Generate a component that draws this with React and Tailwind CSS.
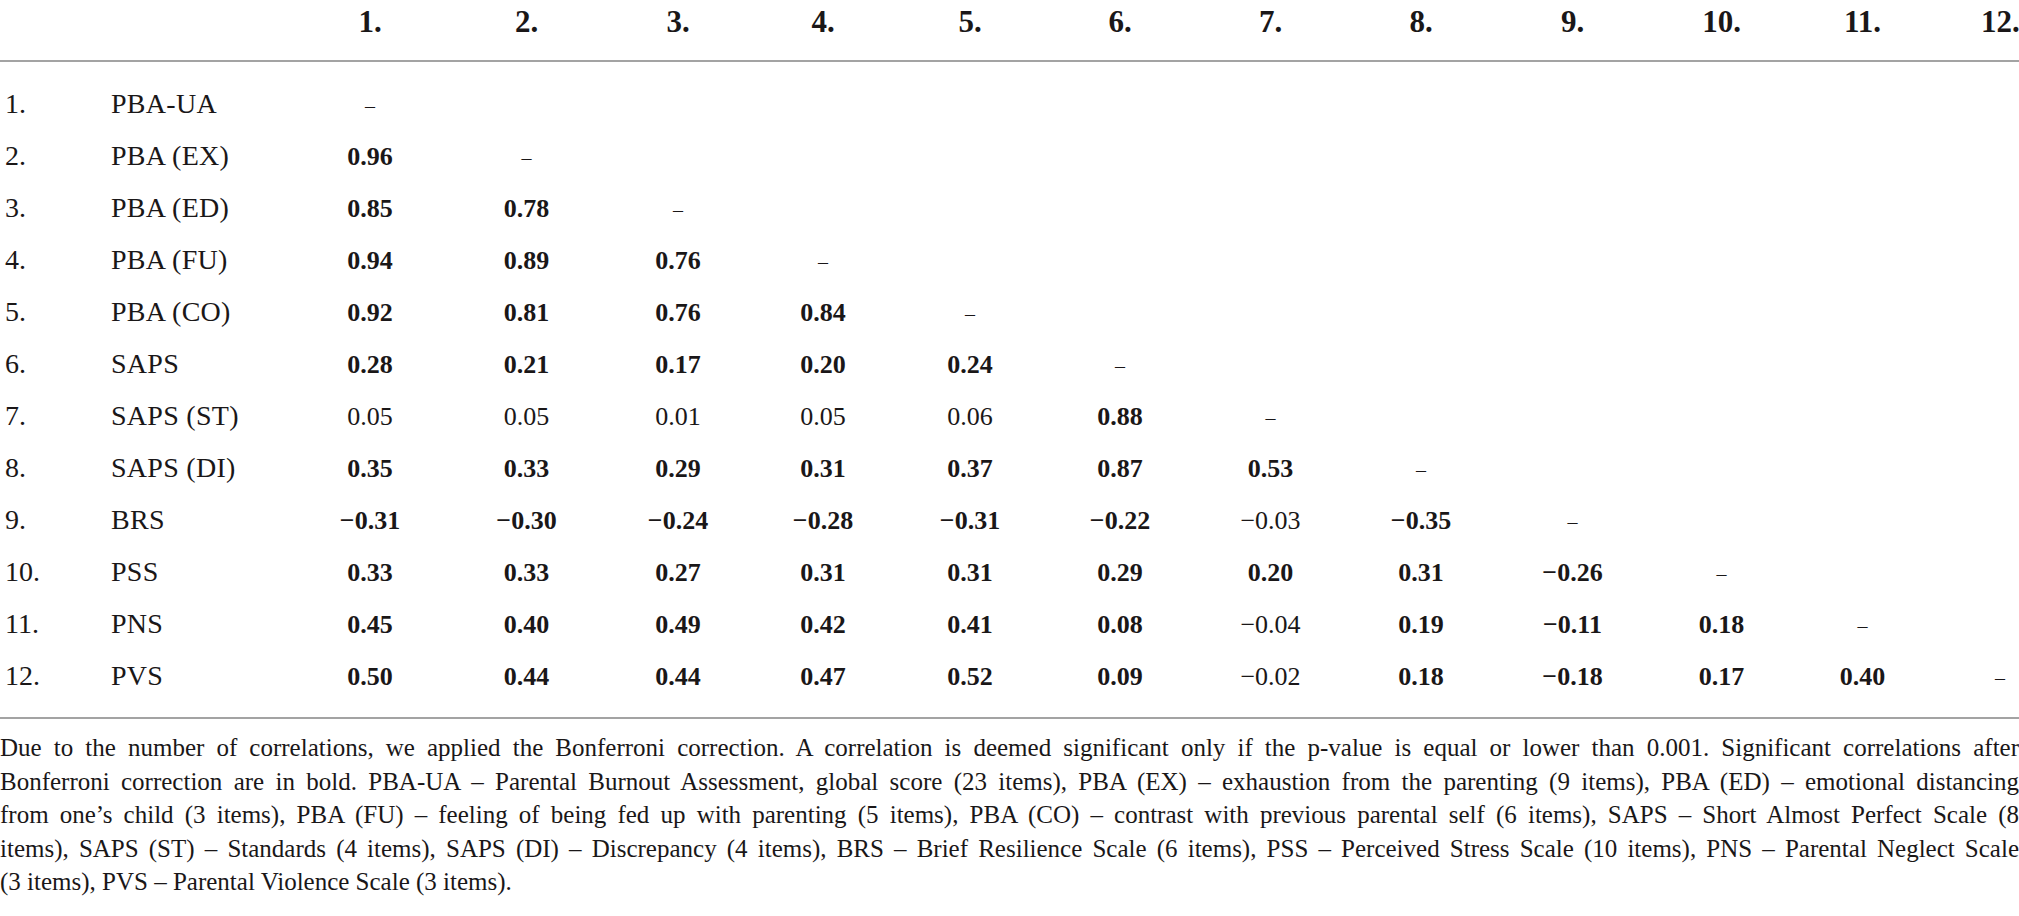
import React from 'react';

const cols = ['1.', '2.', '3.', '4.', '5.', '6.', '7.', '8.', '9.', '10.', '11.', '12.'];

// each cell: [value, bold]
const rows = [
  ['PBA-UA', []],
  ['PBA (EX)', [['0.96', 1]]],
  ['PBA (ED)', [['0.85', 1], ['0.78', 1]]],
  ['PBA (FU)', [['0.94', 1], ['0.89', 1], ['0.76', 1]]],
  ['PBA (CO)', [['0.92', 1], ['0.81', 1], ['0.76', 1], ['0.84', 1]]],
  ['SAPS', [['0.28', 1], ['0.21', 1], ['0.17', 1], ['0.20', 1], ['0.24', 1]]],
  ['SAPS (ST)', [['0.05', 0], ['0.05', 0], ['0.01', 0], ['0.05', 0], ['0.06', 0], ['0.88', 1]]],
  ['SAPS (DI)', [['0.35', 1], ['0.33', 1], ['0.29', 1], ['0.31', 1], ['0.37', 1], ['0.87', 1], ['0.53', 1]]],
  ['BRS', [['−0.31', 1], ['−0.30', 1], ['−0.24', 1], ['−0.28', 1], ['−0.31', 1], ['−0.22', 1], ['−0.03', 0], ['−0.35', 1]]],
  ['PSS', [['0.33', 1], ['0.33', 1], ['0.27', 1], ['0.31', 1], ['0.31', 1], ['0.29', 1], ['0.20', 1], ['0.31', 1], ['−0.26', 1]]],
  ['PNS', [['0.45', 1], ['0.40', 1], ['0.49', 1], ['0.42', 1], ['0.41', 1], ['0.08', 1], ['−0.04', 0], ['0.19', 1], ['−0.11', 1], ['0.18', 1]]],
  ['PVS', [['0.50', 1], ['0.44', 1], ['0.44', 1], ['0.47', 1], ['0.52', 1], ['0.09', 1], ['−0.02', 0], ['0.18', 1], ['−0.18', 1], ['0.17', 1], ['0.40', 1]]],
];

// footnote lines as set in the reference
const note = [
  'Due to the number of correlations, we applied the Bonferroni correction. A correlation is deemed significant only if the p-value is equal or lower than 0.001. Significant correlations after',
  'Bonferroni correction are in bold. PBA-UA – Parental Burnout Assessment, global score (23 items), PBA (EX) – exhaustion from the parenting (9 items), PBA (ED) – emotional distancing',
  'from one’s child (3 items), PBA (FU) – feeling of being fed up with parenting (5 items), PBA (CO) – contrast with previous parental self (6 items), SAPS – Short Almost Perfect Scale (8',
  'items), SAPS (ST) – Standards (4 items), SAPS (DI) – Discrepancy (4 items), BRS – Brief Resilience Scale (6 items), PSS – Perceived Stress Scale (10 items), PNS – Parental Neglect Scale',
  '(3 items), PVS – Parental Violence Scale (3 items).',
];

const grid =
  'grid grid-cols-[111px_181px_156px_157px_146px_144px_150px_150px_151px_150px_153px_145px_137px_88px]';

function Cell({ children, bold, last }) {
  return (
    <div className={`text-center ${bold ? 'font-bold' : ''} ${last ? 'pl-[50px]' : ''}`}>
      {children}
    </div>
  );
}

export default function App() {
  return (
    <div className="w-[2019px] h-[916px] bg-white text-[#1a1718] font-['Liberation_Serif',serif] overflow-hidden">
      <div className={`${grid} items-start h-[62px] pt-[5px] leading-[34px] border-b-2 border-[#a3a3a3] text-[31px] font-bold`}>
        <div />
        <div />
        {cols.map((c, i) => (
          <Cell key={c} last={i === 11} bold>
            {c}
          </Cell>
        ))}
      </div>

      <div className="pt-[16px] pb-[15px] border-b-2 border-[#a3a3a3] text-[26px]">
        {rows.map(([label, vals], r) => (
          <div key={label} className={`${grid} items-center h-[52px]`}>
            <div className="pl-[5px] text-[28px]">{r + 1}.</div>
            <div className="text-[28px] tracking-[0.01em]">{label}</div>
            {cols.map((c, i) => {
              if (i < vals.length) {
                return (
                  <Cell key={c} bold={vals[i][1]} last={i === 11}>
                    {vals[i][0]}
                  </Cell>
                );
              }
              if (i === vals.length) {
                return (
                  <Cell key={c} last={i === 11}>
                    <span className="text-[20px]">–</span>
                  </Cell>
                );
              }
              return <div key={c} />;
            })}
          </div>
        ))}
      </div>

      <div className="mt-[12px] text-[25px] leading-[33.5px]">
        {note.map((line, i) => (
          <p
            key={i}
            className={i < note.length - 1 ? 'text-justify [text-align-last:justify] whitespace-nowrap' : ''}
          >
            {line}
          </p>
        ))}
      </div>
    </div>
  );
}
